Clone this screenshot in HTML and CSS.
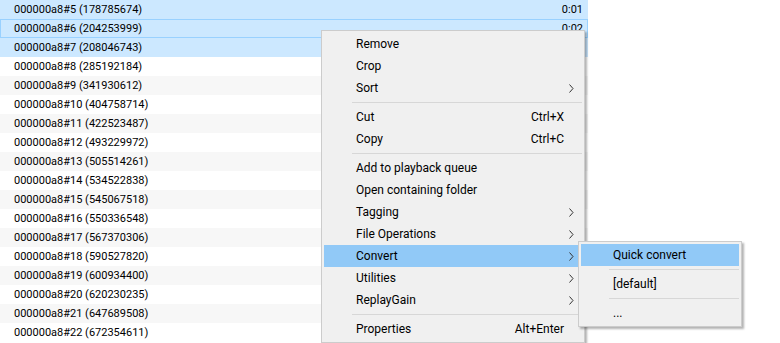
FILE: index.html
```html
<!DOCTYPE html>
<html lang="en">
<head>
    <title>Playlist</title>
    <meta charset="UTF-8">
    <link rel="stylesheet" href="styles.css">
</head>
<body>

<div class="playlist">
    <div class="row selected"><span class="name">000000a8#5 (178785674)</span><span class="time">0:01</span></div>
    <div class="row selected focused"><span class="name">000000a8#6 (204253999)</span><span class="time">0:02</span></div>
    <div class="row selected"><span class="name">000000a8#7 (208046743)</span><span class="time">0:02</span></div>
    <div class="row"><span class="name">000000a8#8 (285192184)</span></div>
    <div class="row odd"><span class="name">000000a8#9 (341930612)</span></div>
    <div class="row"><span class="name">000000a8#10 (404758714)</span></div>
    <div class="row odd"><span class="name">000000a8#11 (422523487)</span></div>
    <div class="row"><span class="name">000000a8#12 (493229972)</span></div>
    <div class="row odd"><span class="name">000000a8#13 (505514261)</span></div>
    <div class="row"><span class="name">000000a8#14 (534522838)</span></div>
    <div class="row odd"><span class="name">000000a8#15 (545067518)</span></div>
    <div class="row"><span class="name">000000a8#16 (550336548)</span></div>
    <div class="row odd"><span class="name">000000a8#17 (567370306)</span></div>
    <div class="row"><span class="name">000000a8#18 (590527820)</span></div>
    <div class="row odd"><span class="name">000000a8#19 (600934400)</span></div>
    <div class="row"><span class="name">000000a8#20 (620230235)</span></div>
    <div class="row odd"><span class="name">000000a8#21 (647689508)</span></div>
    <div class="row"><span class="name">000000a8#22 (672354611)</span></div>
</div>

<div class="menu main-menu">
    <div class="item"><span class="label">Remove</span></div>
    <div class="item"><span class="label">Crop</span></div>
    <div class="item"><span class="label">Sort</span><span class="arrow"><svg width="5" height="9" viewBox="0 0 5 9"><polyline points="0.5,0.5 4,4.5 0.5,8.5"/></svg></span></div>
    <div class="separator"></div>
    <div class="item"><span class="label">Cut</span><span class="shortcut">Ctrl+X</span></div>
    <div class="item"><span class="label">Copy</span><span class="shortcut">Ctrl+C</span></div>
    <div class="separator"></div>
    <div class="item"><span class="label">Add to playback queue</span></div>
    <div class="item"><span class="label">Open containing folder</span></div>
    <div class="item"><span class="label">Tagging</span><span class="arrow"><svg width="5" height="9" viewBox="0 0 5 9"><polyline points="0.5,0.5 4,4.5 0.5,8.5"/></svg></span></div>
    <div class="item"><span class="label">File Operations</span><span class="arrow"><svg width="5" height="9" viewBox="0 0 5 9"><polyline points="0.5,0.5 4,4.5 0.5,8.5"/></svg></span></div>
    <div class="item active"><span class="label">Convert</span><span class="arrow"><svg width="5" height="9" viewBox="0 0 5 9"><polyline points="0.5,0.5 4,4.5 0.5,8.5"/></svg></span></div>
    <div class="item"><span class="label">Utilities</span><span class="arrow"><svg width="5" height="9" viewBox="0 0 5 9"><polyline points="0.5,0.5 4,4.5 0.5,8.5"/></svg></span></div>
    <div class="item"><span class="label">ReplayGain</span><span class="arrow"><svg width="5" height="9" viewBox="0 0 5 9"><polyline points="0.5,0.5 4,4.5 0.5,8.5"/></svg></span></div>
    <div class="separator"></div>
    <div class="item"><span class="label">Properties</span><span class="shortcut">Alt+Enter</span></div>
</div>

<div class="menu sub-menu">
    <div class="item active"><span class="label">Quick convert</span></div>
    <div class="separator"></div>
    <div class="item"><span class="label">[default]</span></div>
    <div class="separator"></div>
    <div class="item"><span class="label">...</span></div>
</div>

</body>
</html>
```

FILE: styles.css
```css
body {
    margin: 0;
    background-color: #ffffff;
    font-family: Roboto, 'Noto Sans', sans-serif;
    font-size: 12px;
    color: #000000;
}

.playlist {
    width: 588px;
    font-size: 11px;
}
.playlist .row {
    height: 19px;
    line-height: 19px;
    padding: 0 5px 0 14px;
    display: flex;
    justify-content: space-between;
    box-sizing: border-box;
}
.playlist .row.odd {
    background-color: #f7f7f7;
}
.playlist .row.selected {
    background-color: #cce8ff;
}
.playlist .row.focused {
    border: 1px solid #99d1ff;
    line-height: 17px;
    padding-left: 13px;
    padding-right: 4px;
}

/* context menus lie over the list */
.menu {
    position: absolute;
    background-color: #f0f0f0;
    border: 1px solid #cccccc;
    box-shadow: 2px 2px 2px rgba(0, 0, 0, 0.3);
}
.main-menu {
    left: 321px;
    top: 30px;
    width: 255px;
    padding: 2px 5px 2px 2px;
}
.sub-menu {
    left: 578px;
    top: 241px;
    width: 158px;
    padding: 2px;
}
.menu .item {
    height: 22px;
    display: flex;
    align-items: center;
    padding-left: 32px;
}
.menu .item.active {
    background-color: #91c9f7;
}
.menu .item .label {
    flex: 1;
}
.menu .item .shortcut {
    margin-right: 15px;
}
.menu .item .arrow {
    width: 15px;
    display: flex;
    justify-content: flex-start;
    padding-left: 5px;
    box-sizing: border-box;
}
.menu .item .arrow svg {
    display: block;
    fill: none;
    stroke: #333333;
    stroke-width: 1;
}
.menu .separator {
    height: 1px;
    background-color: #d7d7d7;
    margin: 3px 0 3px 28px;
}
.main-menu .separator {
    margin-right: -3px;
}
.main-menu .separator + .item {
    margin-top: 1px;
}
.main-menu .item:nth-child(3) + .separator + .item {
    margin-top: 0;
}
```
